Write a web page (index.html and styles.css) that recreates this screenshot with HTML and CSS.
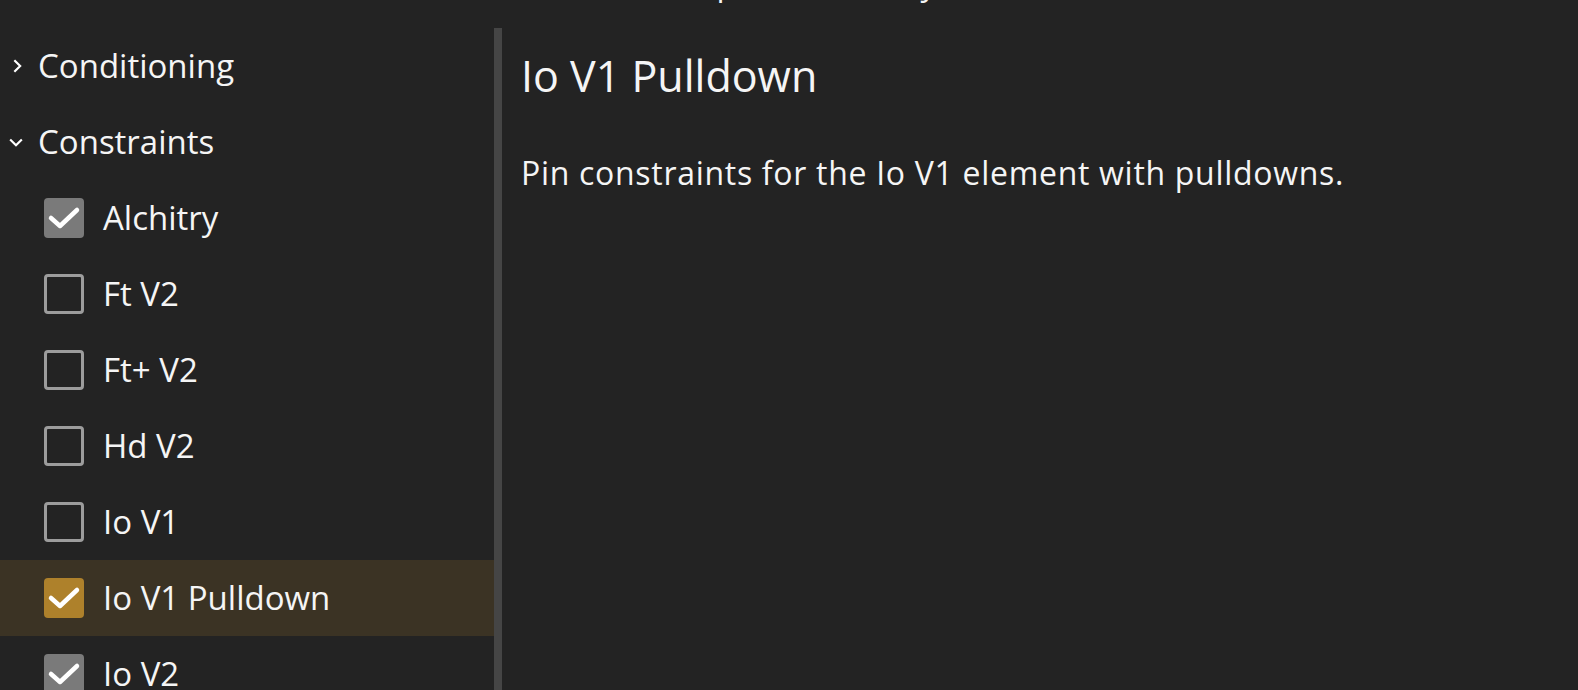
FILE: index.html
```html
<!DOCTYPE html>
<html>
<head>
<meta charset="utf-8">
<link rel="stylesheet" href="styles.css">
</head>
<body>
<div class="app">
  <header class="titlebar"><span class="title">Component Library</span></header>
  <div class="main">
    <nav class="sidebar">
      <div class="row group">
        <svg class="chev" viewBox="0 0 24 24"><polyline points="10,5 17,12 10,19"/></svg>
        <span class="label">Conditioning</span>
      </div>
      <div class="row group">
        <svg class="chev" viewBox="0 0 24 24"><polyline points="5,9 12,16 19,9"/></svg>
        <span class="label">Constraints</span>
      </div>
      <div class="row item">
        <span class="box checked"><svg viewBox="0 0 40 40"><polyline points="7,20 16,28 33,12"/></svg></span>
        <span class="label">Alchitry</span>
      </div>
      <div class="row item">
        <span class="box"></span>
        <span class="label">Ft V2</span>
      </div>
      <div class="row item">
        <span class="box"></span>
        <span class="label">Ft+ V2</span>
      </div>
      <div class="row item">
        <span class="box"></span>
        <span class="label">Hd V2</span>
      </div>
      <div class="row item">
        <span class="box"></span>
        <span class="label">Io V1</span>
      </div>
      <div class="row item selected">
        <span class="box accent"><svg viewBox="0 0 40 40"><polyline points="7,20 16,28 33,12"/></svg></span>
        <span class="label">Io V1 Pulldown</span>
      </div>
      <div class="row item">
        <span class="box checked"><svg viewBox="0 0 40 40"><polyline points="7,20 16,28 33,12"/></svg></span>
        <span class="label">Io V2</span>
      </div>
    </nav>
    <div class="divider"></div>
    <section class="content">
      <h1 class="heading">Io V1 Pulldown</h1>
      <p class="desc">Pin constraints for the Io V1 element with pulldowns.</p>
    </section>
  </div>
</div>
</body>
</html>
```
FILE: styles.css
```css
html, body {
  margin: 0;
  padding: 0;
  background: #232323;
  overflow: hidden;
}
body {
  font-family: "Open Sans", "Noto Sans", sans-serif;
  color: #f5f5f5;
}
.app {
  width: 1578px;
  height: 690px;
  display: flex;
  flex-direction: column;
  overflow: hidden;
}
.titlebar {
  height: 28px;
  flex: none;
  overflow: hidden;
  display: flex;
  justify-content: center;
}
.title {
  display: block;
  font-size: 32px;
  line-height: 40px;
  margin-top: -37px;
  padding-left: 6px;
}
.main {
  flex: 1;
  display: flex;
  min-height: 0;
}
.sidebar {
  width: 494px;
  flex: none;
  display: flex;
  flex-direction: column;
}
.row {
  height: 76px;
  flex: none;
  display: flex;
  align-items: center;
}
.group {
  padding-left: 6px;
}
.chev {
  width: 20px;
  height: 20px;
  fill: none;
  stroke: #ffffff;
  stroke-width: 2.6;
  margin-right: 12px;
}
.item {
  padding-left: 44px;
}
.selected {
  background: #3b3324;
}
.box {
  width: 40px;
  height: 40px;
  box-sizing: border-box;
  border: 3px solid #9c9c9c;
  border-radius: 4px;
  margin-right: 19px;
  flex: none;
}
.box.checked {
  background: #7a7a7a;
  border: none;
}
.box.accent {
  background: #ae812b;
  border: none;
}
.box svg {
  display: block;
  width: 40px;
  height: 40px;
  fill: none;
  stroke: #ffffff;
  stroke-width: 4.5;
  stroke-linecap: round;
  stroke-linejoin: round;
}
.label {
  font-size: 33px;
  line-height: 40px;
  white-space: nowrap;
}
.divider {
  width: 8px;
  flex: none;
  background: #454545;
}
.content {
  flex: 1;
  padding: 0 0 0 19px;
}
.heading {
  margin: 0;
  font-weight: 400;
  font-size: 43px;
  line-height: 56px;
  padding-top: 20px;
}
.desc {
  margin: 0;
  font-size: 32px;
  letter-spacing: 0.7px;
  line-height: 40px;
  padding-top: 49px;
}
```
